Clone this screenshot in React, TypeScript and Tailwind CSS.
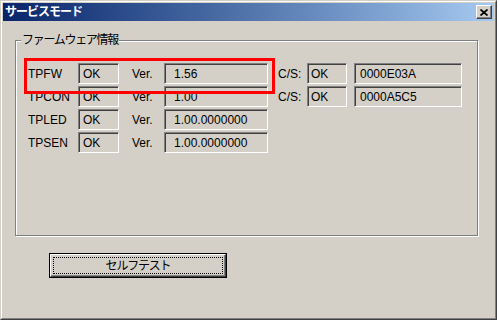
import React from 'react'

const font = { fontFamily: '"Liberation Sans", "Noto Sans CJK JP", sans-serif' }

// sunken read-only field, classic windows look
function Field({ w, pl, children }: { w: string; pl: string; children: React.ReactNode }) {
  return (
    <div
      className={`${w} ${pl} h-[21px] flex items-center border-t border-l border-t-[#808080] border-l-[#808080] border-b border-r border-b-white border-r-white shadow-[inset_1px_1px_0_#404040] text-[12px] text-black leading-none whitespace-nowrap overflow-hidden`}
    >
      {children}
    </div>
  )
}

const rows = [
  { name: 'TPFW', st: 'OK', ver: '1.56', cs: { st: 'OK', sum: '0000E03A' } },
  { name: 'TPCON', st: 'OK', ver: '1.00', cs: { st: 'OK', sum: '0000A5C5' } },
  { name: 'TPLED', st: 'OK', ver: '1.00.0000000' },
  { name: 'TPSEN', st: 'OK', ver: '1.00.0000000' },
]

export default function App() {
  return (
    <div className="w-[500px] h-[321px] bg-white" style={font}>
      <div className="relative w-[497px] h-[320px] bg-[#d4d0c8] border border-t-[#d4d0c8] border-l-[#d4d0c8] border-r-[#404040] border-b-[#404040]">
        <div className="h-full border border-t-white border-l-white border-r-[#808080] border-b-[#808080] p-[1px] flex flex-col">
          {/* Title bar */}
          <div className="h-[18px] flex items-center justify-between bg-gradient-to-r from-[#0a246a] to-[#a6caf0] pl-[2px] pr-[2px]">
            <span className="text-white font-bold text-[12px] tracking-[-1px] leading-none">サービスモード</span>
            <button className="w-[16px] h-[14px] bg-[#d4d0c8] flex items-center justify-center border border-t-white border-l-white border-r-[#404040] border-b-[#404040] shadow-[inset_-1px_-1px_0_#808080]">
              <svg width="8" height="7" viewBox="0 0 8 7">
                <path d="M0.5 0.5 L7.5 6.5 M7.5 0.5 L0.5 6.5" stroke="#000" strokeWidth="1.7" fill="none" />
              </svg>
            </button>
          </div>

          {/* Group box */}
          <div className="relative ml-[12px] mt-[19px] w-[463px] h-[196px] border border-[#808080] shadow-[inset_1px_1px_0_#fff,1px_1px_0_#fff]">
            <span className="absolute -top-[9px] left-[5px] bg-[#d4d0c8] px-[1px] text-[12px] tracking-[-1.3px] leading-[16px] text-black">
              ファームウェア情報
            </span>
            <div className="mt-[22px] ml-[12px] flex flex-col gap-[2px]">
              {rows.map((r) => (
                <div key={r.name} className="flex items-center h-[21px] text-[12px] text-black">
                  <span className="w-[50px] leading-none">{r.name}</span>
                  <Field w="w-[41px]" pl="pl-[4px]">{r.st}</Field>
                  <span className="w-[13px]" />
                  <span className="w-[32px] leading-none">Ver.</span>
                  <Field w="w-[104px]" pl="pl-[9px]">{r.ver}</Field>
                  {r.cs && (
                    <>
                      <span className="w-[10px]" />
                      <span className="w-[29px] leading-none">C/S:</span>
                      <Field w="w-[40px]" pl="pl-[3px]">{r.cs.st}</Field>
                      <span className="w-[7px]" />
                      <Field w="w-[108px]" pl="pl-[5px]">{r.cs.sum}</Field>
                    </>
                  )}
                </div>
              ))}
            </div>
          </div>

          {/* Self test button */}
          <div className="ml-[46px] mt-[17px] w-[178px] h-[25px] border border-black">
            <div className="h-full border border-t-white border-l-white border-r-[#404040] border-b-[#404040] shadow-[inset_-1px_-1px_0_#808080] p-[2px]">
              <div className="h-full border border-dotted border-black flex items-center justify-center text-[12px] tracking-[-1.2px] text-black leading-none">
                セルフテスト
              </div>
            </div>
          </div>
        </div>

        {/* red highlight annotation */}
        <div className="absolute left-[23px] top-[57px] w-[251px] h-[36px] border-[3px] border-[#ff0000]" />
      </div>
    </div>
  )
}
